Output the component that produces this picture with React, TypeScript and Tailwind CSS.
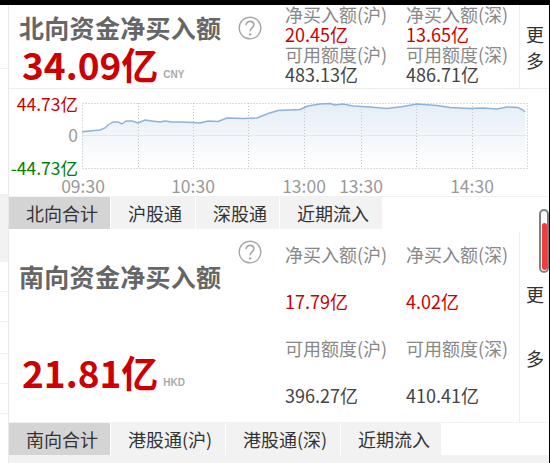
const FONT = "font-['Noto_Sans_CJK_SC','Liberation_Sans',sans-serif]";

const LINE: [number, number][] = [
  [82, 132], [84, 131.5], [90, 131], [100, 130], [105, 128], [108, 125], [113, 122], [118, 122], [122, 124],
  [126, 121], [132, 121], [138, 123], [145, 120], [152, 121], [160, 122], [165, 121], [172, 122], [180, 122],
  [193, 122.5], [200, 123], [208, 121], [218, 121.5], [227, 118], [243, 118.5], [257, 118], [268, 113.5],
  [278, 110.5], [300, 109.5], [308, 106], [320, 104], [330, 103.5], [335, 105], [343, 104], [353, 106],
  [370, 107], [387, 108.5], [403, 106.5], [417, 104], [437, 105.5], [450, 107.5], [470, 108.5], [483, 108],
  [497, 109], [507, 107], [518, 107.5], [523, 110], [525, 112],
];

const GRID_X = [138, 193, 248, 304, 361, 416, 472];

const HelpIcon = () => (
  <svg width="24" height="24" viewBox="0 0 26 26" fill="none" className="shrink-0">
    <circle cx="13" cy="13" r="11.7" stroke="#a8a8a8" strokeWidth="1.5" />
    <path d="M8.8 10c0-2.600 1.900-4.200 4.300-4.200s4.100 1.500 4.100 3.700c0 3.200-4.100 3.400-4.100 7" stroke="#a8a8a8" strokeWidth="1.800" />
    <circle cx="13.100" cy="20" r="1.300" fill="#a8a8a8" />
  </svg>
);

const Chart = () => {
  const d = LINE.map(([x, y]) => `${x},${y}`).join(" ");
  return (
    <div>
      <svg width="540" height="87" viewBox="9 89 540 87" className="block overflow-visible">
        <defs>
          <linearGradient id="area" x1="0" y1="0" x2="0" y2="1">
            <stop offset="0" stopColor="#e6edf6" />
            <stop offset="1" stopColor="#ffffff" />
          </linearGradient>
        </defs>
        <polygon points={`82,168 ${d} 525,168`} fill="url(#area)" />
        <line x1="82" y1="135.5" x2="527" y2="135.5" stroke="#e3e6ea" />
        {GRID_X.map((x) => (
          <line key={x} x1={x + 0.5} y1="103" x2={x + 0.5} y2="168" stroke="#c4c4c4" strokeDasharray="1 2" />
        ))}
        <rect x="82.5" y="103.5" width="445" height="65" fill="none" stroke="#b8b8b8" strokeDasharray="1 2" />
        <polyline points={d} fill="none" stroke="#8db2d6" strokeWidth="1.4" />
        <g fontFamily="'Noto Sans CJK SC', sans-serif" fontSize="17.5" textAnchor="end">
          <text x="78" y="111" fill="#cc0000">44.73亿</text>
          <text x="78" y="142" fill="#999999">0</text>
          <text x="78" y="175" fill="#008000">-44.73亿</text>
        </g>
      </svg>
      <div className="flex h-[20px] pl-[52px] text-[17.5px] leading-[20px] text-[#999]">
        <span className="w-[44px] text-center">09:30</span>
        <span className="w-[44px] text-center ml-[66px]">10:30</span>
        <span className="w-[44px] text-center ml-[67px]">13:00</span>
        <span className="w-[44px] text-center ml-[13px]">13:30</span>
        <span className="w-[44px] text-center ml-[67px]">14:30</span>
      </div>
    </div>
  );
};

const Tabs = ({ items }: { items: [string, number][] }) => (
  <div className="flex h-[33px] pt-[1px] bg-[#f2f2f2] mr-[1px]">
    {items.map(([label, w], i) => (
      <div
        key={label}
        style={{ width: w }}
        className={`flex items-center pl-[17px] whitespace-nowrap text-[18px] leading-none text-[#333] border-r border-white ${
          i === 0 ? "bg-[#d4d4d4]" : "bg-[#f2f2f2]"
        }`}
      >
        {label}
      </div>
    ))}
    <div className="flex-1 bg-white" />
  </div>
);

const Stat = ({ label, value, red }: { label: string; value: string; red?: boolean }) => (
  <>
    <div className="text-[#888]">{label}</div>
    <div className={red ? "text-[#cc0000]" : "text-[#444]"}>{value}</div>
  </>
);

const App = () => {
  return (
    <div className={`w-[550px] h-[463px] overflow-hidden bg-white relative flex flex-col ${FONT}`}>
      <div className="h-[5px] bg-black shrink-0 relative z-10" />
      <div className="flex flex-1 min-h-0 border-r border-black">
        {/* left strip */}
        <div className="w-[9px] shrink-0 border-r border-[#e9e9e9] flex flex-col">
          <div className="h-[64px] border-b border-[#f0f0f0]" />
          <div className="h-[126px] border-b border-[#f0f0f0]" />
          <div className="h-[67px] bg-[#f2f2f2]" />
          <div className="h-[30px] border-b border-[#f0f0f0]" />
          <div className="h-[30px] border-b border-[#f0f0f0]" />
          <div className="h-[32px] border-b border-[#f0f0f0]" />
          <div className="h-[30px] border-b border-[#f0f0f0]" />
          <div className="h-[30px] border-b border-[#f0f0f0]" />
        </div>

        <div className="flex-1 min-w-0 flex flex-col">
          {/* north */}
          <div className="flex h-[84px] border-b border-[#eeeeee]">
            <div className="w-[267px] pl-[10px]">
              <div className="flex items-center gap-[17px] h-[38px] pt-[7px]">
                <div className="text-[25px] leading-none font-bold text-[#666] tracking-[0.3px]">北向资金净买入额</div>
                <HelpIcon />
              </div>
              <div className="flex items-end pl-[3px] -mt-[1px]">
                <span className="text-[37px] leading-[44px] font-bold text-[#cc0000]">34.09亿</span>
                <span className="text-[10px] leading-none text-[#aaa] font-bold ml-[5px] mb-[6px] font-['Liberation_Sans']">CNY</span>
              </div>
            </div>
            <div className="w-[243px] pl-[9px] -mt-[1px] grid grid-cols-[121px_121px] grid-rows-[20px_20px_20px_20px] text-[18px] leading-[20px] whitespace-nowrap">
              <div className="grid grid-rows-subgrid row-span-4">
                <Stat label="净买入额(沪)" value="20.45亿" red />
                <Stat label="可用额度(沪)" value="483.13亿" />
              </div>
              <div className="grid grid-rows-subgrid row-span-4">
                <Stat label="净买入额(深)" value="13.65亿" red />
                <Stat label="可用额度(深)" value="486.71亿" />
              </div>
            </div>
            <div className="flex-1 border-l border-[#eeeeee] flex flex-col pl-[6px] pt-[20px] gap-[8px] text-[18px] leading-[18px] text-[#333]">
              <span>更</span>
              <span>多</span>
            </div>
          </div>
          <Chart />
          <Tabs items={[["北向合计", 102], ["沪股通", 85], ["深股通", 84], ["近期流入", 103]]} />
          <div className="h-[3px]" />

          {/* south */}
          <div className="flex h-[190px]">
            <div className="w-[267px] pl-[10px] flex flex-col">
              <div className="pl-[219px] pt-[8px] h-[32px]">
                <HelpIcon />
              </div>
              <div className="text-[25px] leading-none font-bold text-[#666] tracking-[0.3px]">南向资金净买入额</div>
              <div className="flex items-end pl-[3px] mt-[61px]">
                <span className="text-[37px] leading-[44px] font-bold text-[#cc0000]">21.81亿</span>
                <span className="text-[10px] leading-none text-[#aaa] font-bold ml-[5px] mb-[6px] font-['Liberation_Sans']">HKD</span>
              </div>
            </div>
            <div className="w-[243px] pl-[9px] -mt-[2px] grid grid-cols-[121px_121px] grid-rows-[47px_47px_47px_47px] items-center text-[18px] leading-[20px] whitespace-nowrap">
              <div className="grid grid-rows-subgrid row-span-4 items-center">
                <Stat label="净买入额(沪)" value="17.79亿" red />
                <Stat label="可用额度(沪)" value="396.27亿" />
              </div>
              <div className="grid grid-rows-subgrid row-span-4 items-center">
                <Stat label="净买入额(深)" value="4.02亿" red />
                <Stat label="可用额度(深)" value="410.41亿" />
              </div>
            </div>
            <div className="flex-1 border-l border-[#eeeeee] flex flex-col pl-[6px] pt-[53px] gap-[46px] text-[18px] leading-[18px] text-[#333]">
              <span>更</span>
              <span>多</span>
            </div>
          </div>
          <Tabs items={[["南向合计", 102], ["港股通(沪)", 115], ["港股通(深)", 115], ["近期流入", 101]]} />
          <div className="flex-1 bg-[#f2f2f2]" />
        </div>
      </div>

      {/* overlay scrollbar */}
      <div className="absolute left-[539px] top-[209px] w-[10px] h-[64px] rounded-[5px] border-[2px] border-[#808080] bg-white flex items-end justify-center pb-[1px]">
        <div className="w-[5px] h-[47px] rounded-[3px] bg-[#f03c3c]" />
      </div>
    </div>
  );
};

export default App;
